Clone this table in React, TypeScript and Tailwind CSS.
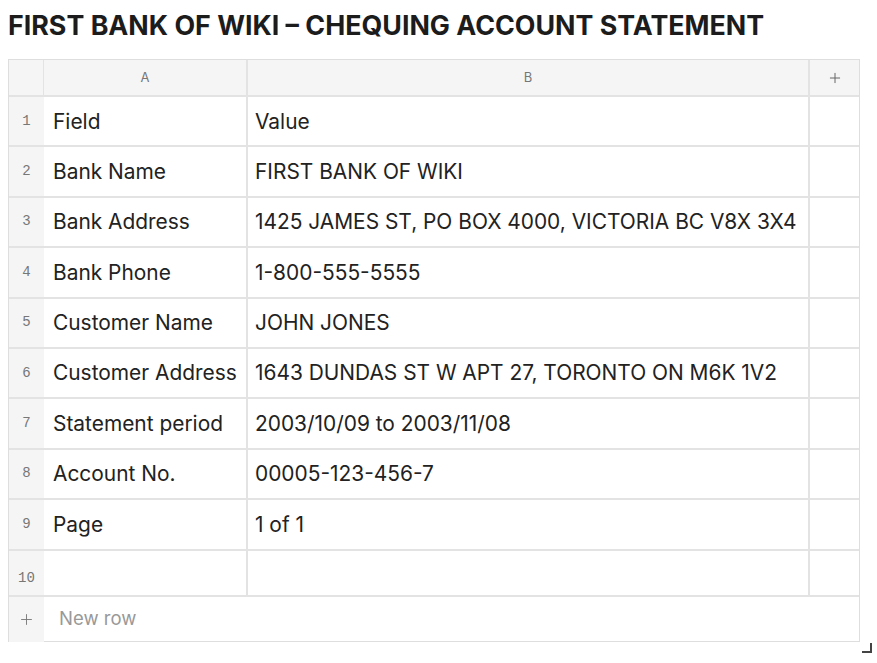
import { Plus } from "lucide-react";

const rows: [string, string][] = [
  ["Field", "Value"],
  ["Bank Name", "FIRST BANK OF WIKI"],
  ["Bank Address", "1425 JAMES ST, PO BOX 4000, VICTORIA BC V8X 3X4"],
  ["Bank Phone", "1-800-555-5555"],
  ["Customer Name", "JOHN JONES"],
  ["Customer Address", "1643 DUNDAS ST W APT 27, TORONTO ON M6K 1V2"],
  ["Statement period", "2003/10/09 to 2003/11/08"],
  ["Account No.", "00005-123-456-7"],
  ["Page", "1 of 1"],
  ["", ""],
];

export default function App() {
  return (
    <div className="min-h-screen bg-white font-['Inter',sans-serif] text-[#222]">
      <h1 className="px-2 pt-[7px] text-[26.8px] font-bold leading-[36px] text-[#1c1c1c]">
        FIRST BANK OF WIKI – CHEQUING ACCOUNT STATEMENT
      </h1>
      <div className="relative ml-2 mt-[16px] w-[852px]">
        <div className="border border-[#dedede]">
          <div className="flex h-[37px] border-b-2 border-[#e3e3e3] bg-[#f5f5f5] text-[13px] text-[#777]">
            <div className="w-[35px] border-r border-[#e3e3e3]" />
            <div className="flex w-[204px] items-center justify-center border-r-2 border-[#e3e3e3]">A</div>
            <div className="flex w-[562px] items-center justify-center border-r-2 border-[#e3e3e3]">B</div>
            <div className="flex flex-1 items-center justify-center text-[#666]">
              <Plus size={16} strokeWidth={1.5} />
            </div>
          </div>
          {rows.map(([a, b], i) => (
            <div
              key={i}
              className={`flex border-b-2 border-[#e3e3e3] ${i === 9 ? "h-[46px]" : "h-[50.4px]"}`}
            >
              <div
                className={`flex w-[35px] justify-center bg-[#f5f5f5] font-['Liberation_Mono',monospace] text-[14px] text-[#777] ${
                  i === 9 ? "items-end pb-[6px]" : "items-center"
                }`}
              >
                {i + 1}
              </div>
              <div className="flex w-[204px] items-center border-r-2 border-[#e3e3e3] pl-[9px] text-[20.9px] whitespace-nowrap">
                {a}
              </div>
              <div className="flex w-[562px] items-center border-r-2 border-[#e3e3e3] pl-[7px] text-[20.9px] whitespace-nowrap">
                {b}
              </div>
              <div className="flex-1" />
            </div>
          ))}
          <div className="-mb-[1px] flex h-[45px] items-center">
            <div className="flex h-full w-[35px] items-center justify-center bg-[#f5f5f5] text-[#777]">
              <Plus size={17} strokeWidth={1.3} />
            </div>
            <div className="pl-[15px] text-[18.5px] text-[#999]">New row</div>
          </div>
        </div>
        <div className="absolute -right-[12px] -bottom-[11px] h-[10px] w-[10px] border-r-2 border-b-2 border-[#444]" />
      </div>
    </div>
  );
}
